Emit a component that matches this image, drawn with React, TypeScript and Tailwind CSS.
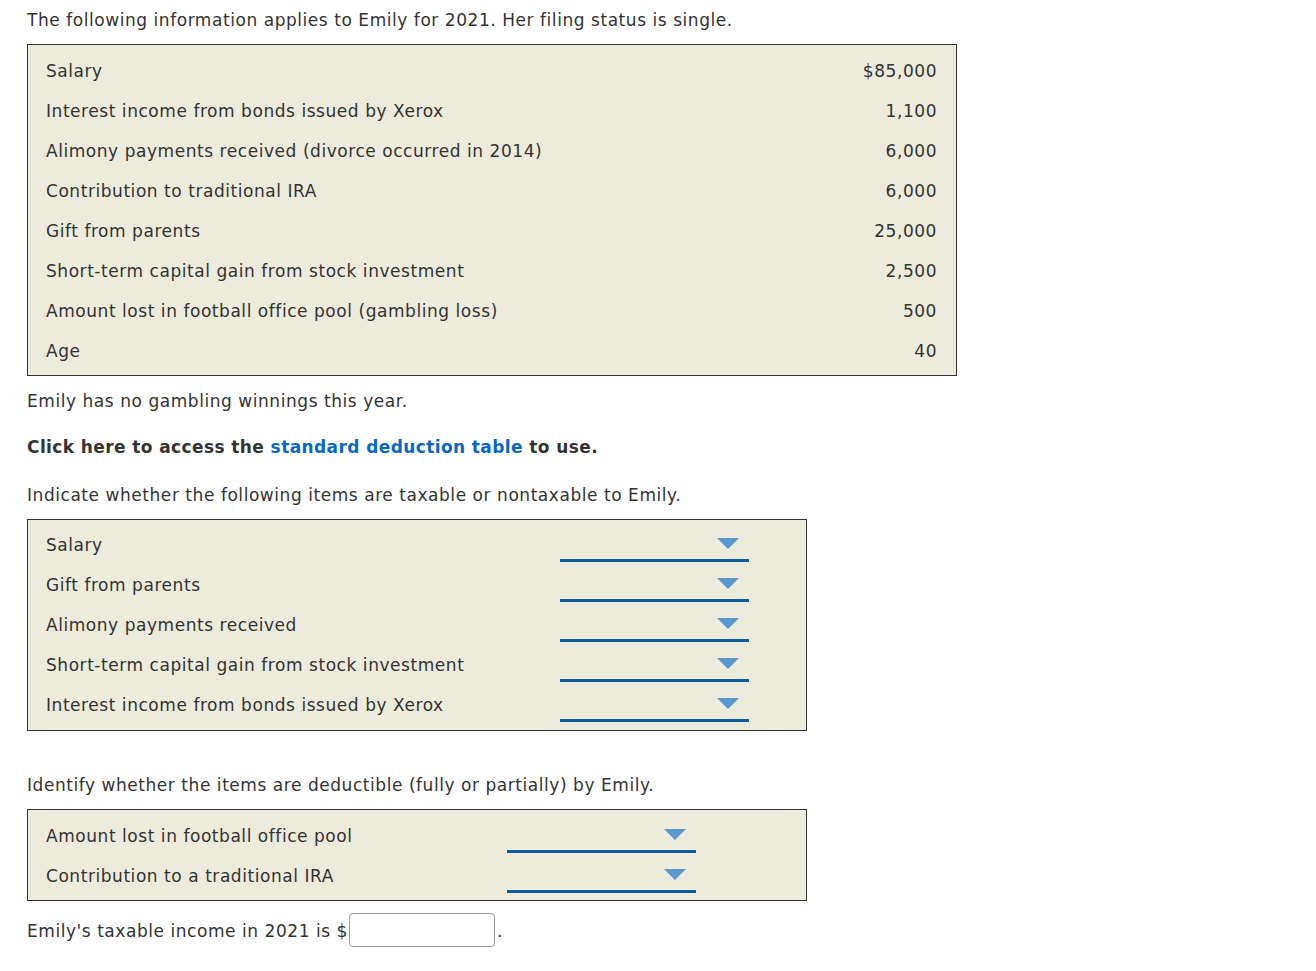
import React from "react";

const info: [string, string][] = [
  ["Salary", "$85,000"],
  ["Interest income from bonds issued by Xerox", "1,100"],
  ["Alimony payments received (divorce occurred in 2014)", "6,000"],
  ["Contribution to traditional IRA", "6,000"],
  ["Gift from parents", "25,000"],
  ["Short-term capital gain from stock investment", "2,500"],
  ["Amount lost in football office pool (gambling loss)", "500"],
  ["Age", "40"],
];

const taxable = [
  "Salary",
  "Gift from parents",
  "Alimony payments received",
  "Short-term capital gain from stock investment",
  "Interest income from bonds issued by Xerox",
];

const deductible = ["Amount lost in football office pool", "Contribution to a traditional IRA"];

function Dropdown() {
  return (
    <div className="relative w-[189px] h-10">
      <svg className="absolute right-[10px] top-[13px]" width="22" height="11" viewBox="0 0 22 11">
        <polygon points="0,0 22,0 11,11" fill="#5a98d0" />
      </svg>
      <div className="absolute left-0 right-0 top-[34px] h-[3px] bg-[#0b5e9a]" />
    </div>
  );
}

export default function App() {
  return (
    <div
      className="pl-[27px] pt-[10px] text-[#333] text-[17px] leading-[20px] tracking-[0.55px]"
      style={{ fontFamily: '"DejaVu Sans", Verdana, sans-serif' }}
    >
      <p>The following information applies to Emily for 2021. Her filing status is single.</p>

      <div className="mt-[14px] w-[930px] border border-[#333] bg-[#edebdb] pl-[18px] pr-[19px] pt-[6px] pb-[4px]">
        {info.map(([label, value]) => (
          <div key={label} className="flex h-10 items-center justify-between">
            <span>{label}</span>
            <span>{value}</span>
          </div>
        ))}
      </div>

      <p className="mt-[15px]">Emily has no gambling winnings this year.</p>

      <p className="mt-[26px] font-bold tracking-[0.4px]">
        Click here to access the <span className="text-[#0a67c4]">standard deduction table</span> to use.
      </p>

      <p className="mt-[28px]">Indicate whether the following items are taxable or nontaxable to Emily.</p>

      <div className="mt-[14px] w-[780px] border border-[#333] bg-[#edebdb] pl-[18px] pt-[5px] pb-[5px]">
        {taxable.map((label) => (
          <div key={label} className="flex h-10 items-center">
            <span className="w-[514px]">{label}</span>
            <Dropdown />
          </div>
        ))}
      </div>

      <p className="mt-[44px]">Identify whether the items are deductible (fully or partially) by Emily.</p>

      <div className="mt-[14px] w-[780px] border border-[#333] bg-[#edebdb] pl-[18px] pt-[6px] pb-[4px]">
        {deductible.map((label) => (
          <div key={label} className="flex h-10 items-center">
            <span className="w-[461px]">{label}</span>
            <Dropdown />
          </div>
        ))}
      </div>

      <div className="mt-[12px] flex items-center">
        <span className="pt-[2px]">Emily's taxable income in 2021 is $</span>
        <input
          type="text"
          className="ml-[1px] h-[34px] w-[146px] rounded-[4px] border border-[#999] bg-white"
        />
        <span className="ml-[2px] pt-[2px]">.</span>
      </div>
    </div>
  );
}
